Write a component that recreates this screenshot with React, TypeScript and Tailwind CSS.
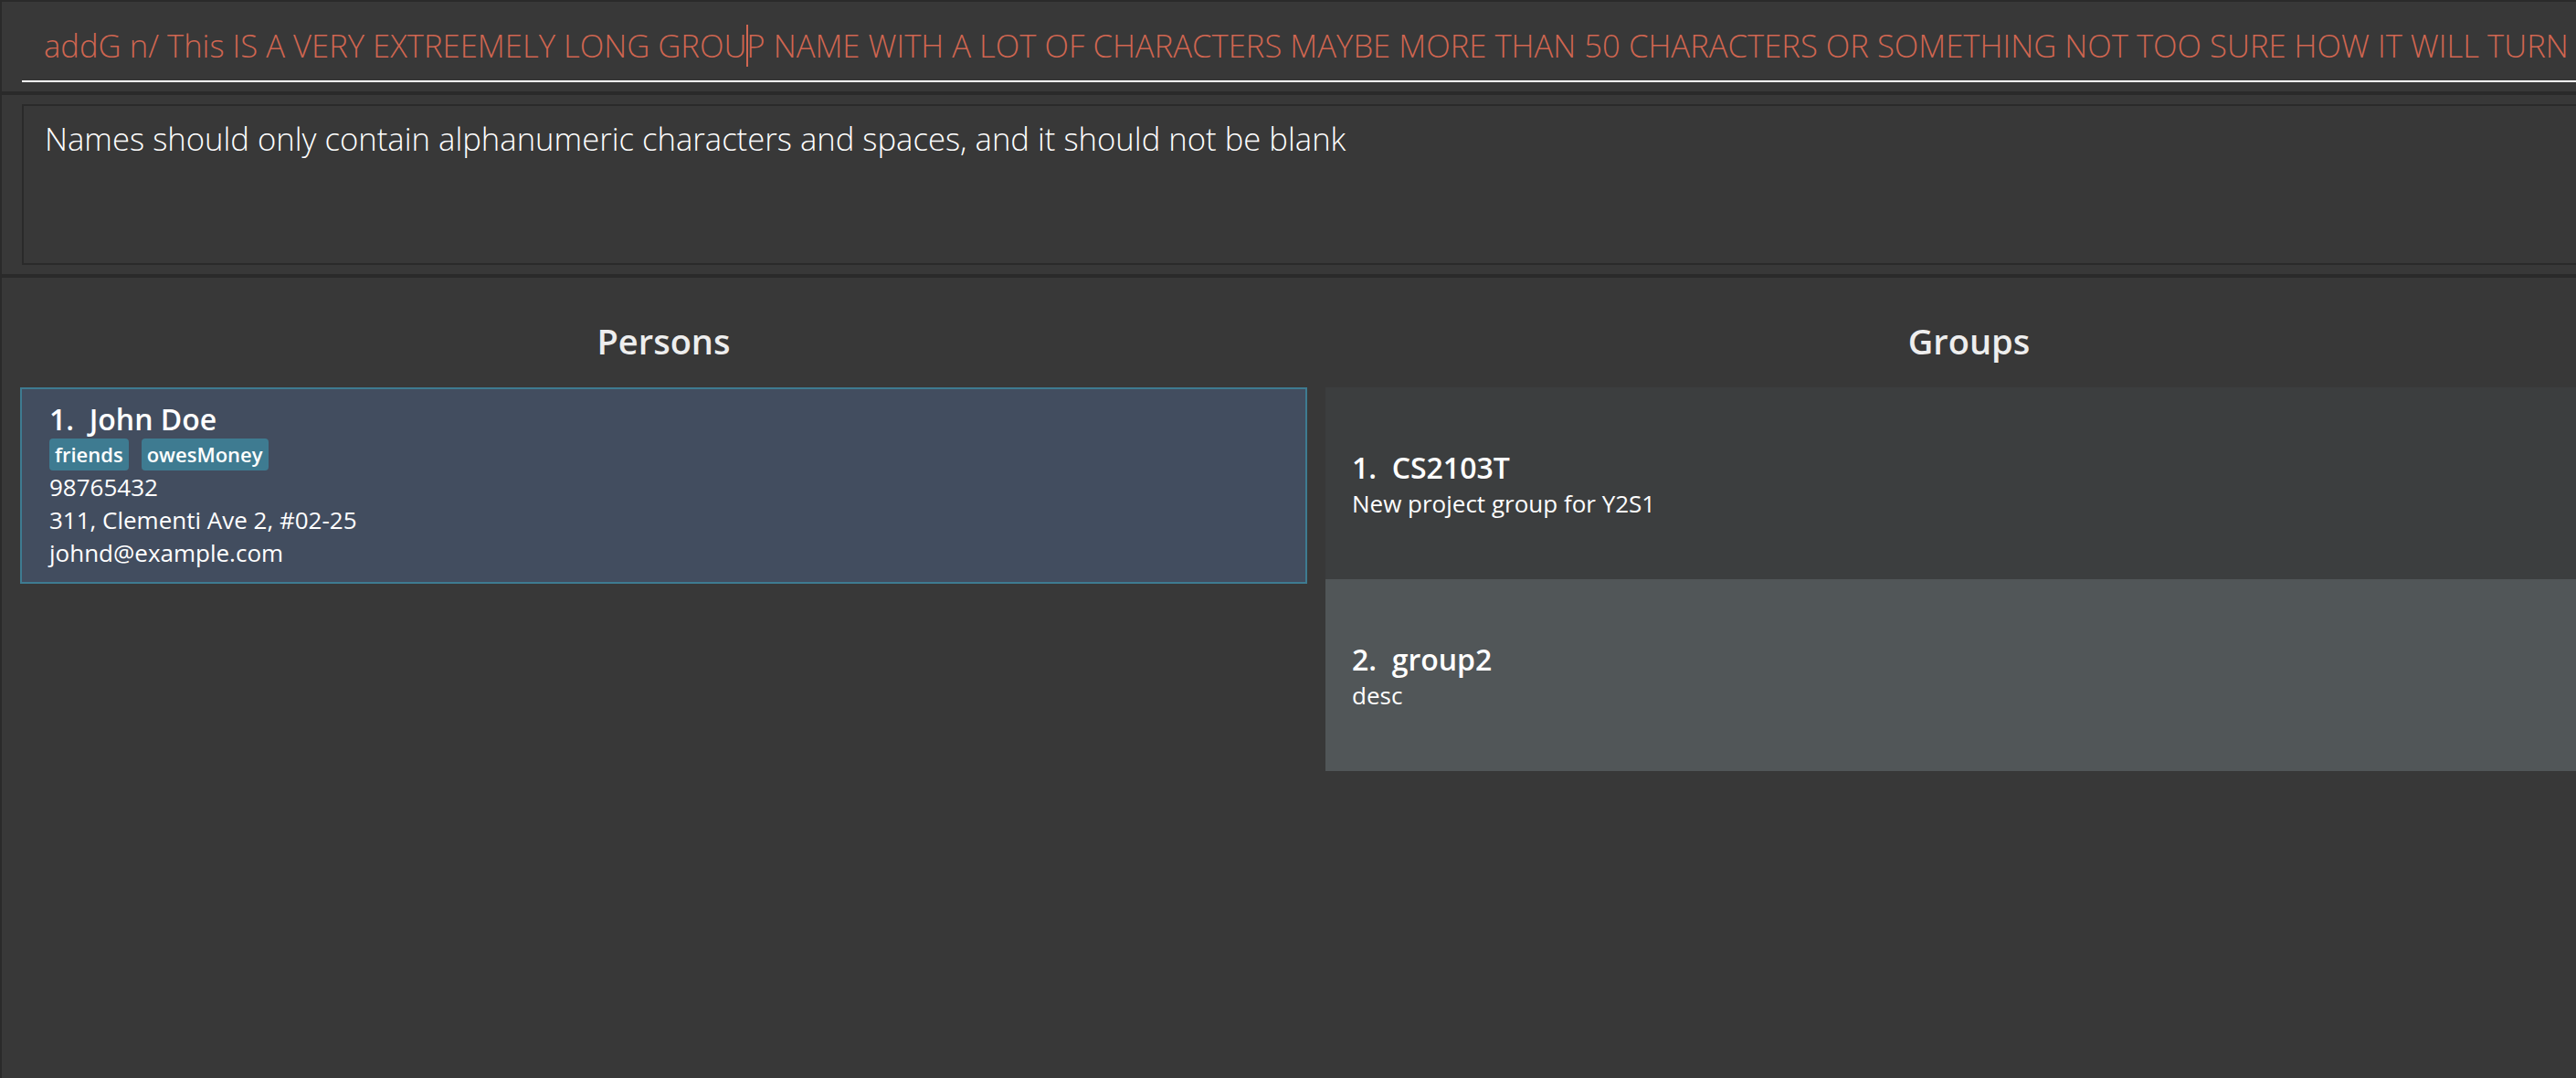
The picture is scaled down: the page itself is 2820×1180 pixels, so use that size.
import React from "react";

type Person = {
  name: string;
  tags: string[];
  phone: string;
  address: string;
  email: string;
};

type Group = {
  name: string;
  description: string;
};

const persons: Person[] = [
  {
    name: "John Doe",
    tags: ["friends", "owesMoney"],
    phone: "98765432",
    address: "311, Clementi Ave 2, #02-25",
    email: "johnd@example.com",
  },
];

const groups: Group[] = [
  { name: "CS2103T", description: "New project group for Y2S1" },
  { name: "group2", description: "desc" },
];

const font = "font-['Open_Sans',_'Liberation_Sans',_sans-serif]";

const PersonCard = ({ person, index }: { person: Person; index: number }) => (
  <div className="border-2 border-[#3e7b91] bg-[#424d5f] pt-[11px] pb-[14px] pl-[30px] text-white">
    <div className="text-[32px] font-semibold leading-[normal]">
      {index}.&nbsp;&nbsp;{person.name}
    </div>
    <div className="flex gap-[14px]">
      {person.tags.map((tag) => (
        <span
          key={tag}
          className="rounded-[4px] bg-[#3e7b91] px-[6px] text-[22px] font-semibold leading-[35px]"
        >
          {tag}
        </span>
      ))}
    </div>
    <div className="text-[26px] leading-[normal]">{person.phone}</div>
    <div className="text-[26px] leading-[normal]">{person.address}</div>
    <div className="text-[26px] leading-[normal]">{person.email}</div>
  </div>
);

const GroupCard = ({ group, index }: { group: Group; index: number }) => (
  <div
    className={`flex h-[210px] flex-col justify-center pl-[29px] text-white ${
      index % 2 === 1 ? "bg-[#3c3e3f]" : "bg-[#515658]"
    }`}
  >
    <div className="text-[32px] font-semibold leading-[normal]">
      {index}.&nbsp;&nbsp;{group.name}
    </div>
    <div className="text-[26px] leading-[normal]">{group.description}</div>
  </div>
);

export default function App() {
  return (
    <div className={`h-screen w-full overflow-hidden bg-[#383838] ${font}`}>
      <div className="h-[1180px] w-[2880px] border-l-2 border-t-2 border-[#2a2a2a]">
        {/* Command box */}
        <div className="pt-[24px] pb-[10px] pl-[22px]">
          <div className="border-b-2 border-white pb-[15px] pl-[24px]">
            <div className="overflow-hidden whitespace-nowrap text-[34.67px] font-light leading-[normal] text-[#d06651]">
              addG n/ This IS A VERY EXTREEMELY LONG GROU
              <span className="relative inline-block h-[46px] w-0 align-[-10px]">
                <span className="absolute left-0 top-0 h-full w-[2px] bg-[#d06651]" />
              </span>
              P NAME WITH A LOT OF CHARACTERS MAYBE MORE THAN 50 CHARACTERS OR SOMETHING NOT TOO SURE HOW IT WILL TURN
            </div>
          </div>
        </div>

        <div className="h-[4px] bg-[#2a2a2a]" />

        {/* Result display */}
        <div className="py-[10px] pl-[22px] pr-[22px]">
          <div className="h-[176px] border-2 border-[#2a2a2a] pl-[23px] pt-[12px]">
            <div className="text-[34.67px] font-light leading-[normal] text-white">
              Names should only contain alphanumeric characters and spaces, and it should not be blank
            </div>
          </div>
        </div>

        <div className="h-[4px] bg-[#2a2a2a]" />

        {/* Lists */}
        <div className="flex px-[10px]">
          <div className="flex-1 px-[10px]">
            <div className="h-[120px] pt-[43px] text-center text-[38px] font-semibold leading-[52px] text-[#eeeeee]">
              Persons
            </div>
            {persons.map((p, i) => (
              <PersonCard key={p.email} person={p} index={i + 1} />
            ))}
          </div>
          <div className="flex-1 px-[10px]">
            <div className="h-[120px] pt-[43px] text-center text-[38px] font-semibold leading-[52px] text-[#eeeeee]">
              Groups
            </div>
            {groups.map((g, i) => (
              <GroupCard key={g.name} group={g} index={i + 1} />
            ))}
          </div>
        </div>
      </div>
    </div>
  );
}
